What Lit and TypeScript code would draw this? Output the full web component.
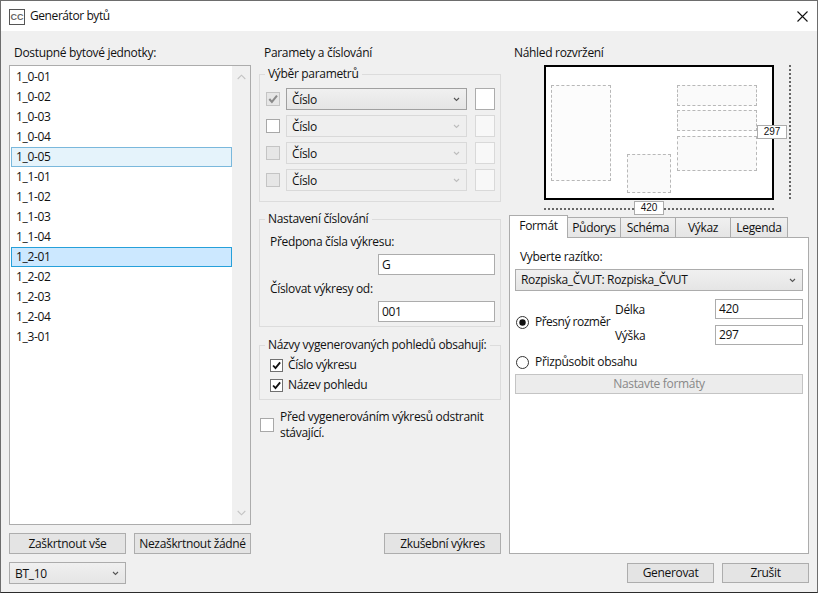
import { LitElement, html, css, svg } from "lit";
import { customElement } from "lit/decorators.js";

const UNITS = ["1_0-01","1_0-02","1_0-03","1_0-04","1_0-05","1_1-01","1_1-02","1_1-03","1_1-04","1_2-01","1_2-02","1_2-03","1_2-04","1_3-01"];

const chev = () => html`<svg class="chev" width="7" height="5" viewBox="0 0 7 5"><path d="M1 1 L3.5 3.5 L6 1" fill="none" stroke="currentColor" stroke-width="1.1"/></svg>`;
const arrow = (cls = "") => html`<svg class="${cls}" width="9" height="6" viewBox="0 0 9 6"><path d="M.7 1 L4.5 4.8 L8.3 1" fill="none" stroke="currentColor" stroke-width="1.1"/></svg>`;
const tick = svg`<path d="M2.5 6.5 L5.3 9.6 L10.8 2.8" fill="none" stroke="currentColor" stroke-width="2.2"/>`;

@customElement("app-root")
export class AppRoot extends LitElement {
  static styles = css`
    :host { display: block; width: 818px; height: 593px; font-family: "Open Sans", "Noto Sans", sans-serif; font-size: 12px; line-height: 16px; color: #111; letter-spacing: -0.32px; }
    * { box-sizing: border-box; }
    .win { width: 818px; height: 593px; border: 1px solid #6d6d6d; border-bottom-color: #2b2b2b; background: #f0f0f0; display: flex; flex-direction: column; }
    .title { height: 30px; background: #fff; display: flex; align-items: center; padding-left: 8px; flex: none; }
    .title-text { letter-spacing: -0.42px; }
    .logo { width: 16px; height: 16px; border: 1px solid #555; font: bold 9px/14px "Liberation Sans", sans-serif; color: #666; text-align: center; letter-spacing: 0; margin-right: 5px; margin-top: 1px; }
    .x { margin-left: auto; margin-right: 9px; display: block; }
    .main { flex: none; height: 523px; display: flex; gap: 8px; padding-left: 8px; }
    .col { display: flex; flex-direction: column; flex: none; }
    .left, .mid { width: 242px; }
    .right { width: 300px; }
    .head { padding-top: 14px; height: 34px; flex: none; padding-left: 5px; }
    .list { height: 460px; flex: none; background: #fff; border: 1px solid #acacac; display: flex; }
    .items { width: 222px; padding: 1px 0 0 1px; }
    .item { height: 20px; width: 221px; padding: 1px 0 0 5px; line-height: 18px; }
    .item.hover { background: #e5f3fb; border: 1px solid #7ab8dc; padding: 0 0 0 4px; }
    .item.sel { background: #cce8ff; border: 1px solid #26a0da; padding: 0 0 0 4px; }
    .sb { margin-left: auto; width: 18px; background: #f0f0f0; display: flex; flex-direction: column; justify-content: space-between; align-items: center; padding: 8px 0; color: #c4c4c4; }
    .sb .up { transform: scaleY(-1); }
    .btnrow { display: flex; gap: 8px; margin-top: 8px; }
    .btn { height: 21px; border: 1px solid #adadad; background: #e4e4e4; display: flex; align-items: center; justify-content: center; flex: none; }
    .w117 { width: 117px; }
    .group { margin: 0; border: 1px solid #dcdcdc; padding: 0; min-width: 0; }
    .group legend { padding: 0 4px 0 3px; height: 16px; white-space: nowrap; }
    .g1 { margin-top: 1px; padding: 6px 5px 10px 6px; }
    .g1 legend { margin-left: -1px; }
    .prow { display: flex; align-items: center; height: 22px; }
    .prow + .prow { margin-top: 5px; }
    .cb { width: 14px; height: 14px; border: 1px solid #707070; background: #fff; flex: none; color: #111; display: block; }
    .cb.dis { background: #e6e6e6; border-color: #c4c4c4; color: #8a8a8a; }
    .cb.soft { border-color: #a8a8a8; }
    .cb svg { display: block; }
    .combo { display: flex; align-items: center; justify-content: space-between; padding: 0 6px 0 5px; height: 22px; border: 1px solid #acacac; background: linear-gradient(#f0f0f0, #e5e5e5); flex: none; color: #555; }
    .combo span { color: #111; }
    .combo.off { background: #efefef; border-color: #d9d9d9; color: #bdbdbd; }
    .c181 { width: 181px; margin-left: 6px; }
    .c181 span, .foot .combo span { padding-top: 2px; }
    .combo.first { border-color: #a0a0a0; }
    .swatch { width: 20px; height: 22px; border: 1px solid #acacac; background: #fff; margin-left: 8px; flex: none; }
    .swatch.off { background: #f8f8f8; border-color: #d9d9d9; }
    .g2 { margin-top: 9px; padding: 7px 5px 4px 10px; }
    .g2 legend, .g3 legend { margin-left: -5px; }
    .input { height: 21px; border: 1px solid #acacac; background: #fff; padding: 0 0 0 3px; display: flex; align-items: center; flex: none; }
    .g2 .input { width: 117px; margin: 4px 0 0 108px; }
    .g2 .lbl2 { margin-top: 6px; }
    .g3 { margin-top: 10px; padding: 4px 0 6px 10px; }
    .cbrow { display: flex; align-items: center; height: 16px; gap: 5px; }
    .cbrow + .cbrow { margin-top: 4px; }
    .cb.small { width: 13px; height: 13px; }
    .before { display: flex; align-items: center; margin-top: 9px; gap: 6px; padding-left: 1px; white-space: nowrap; }
    .test { margin-top: auto; align-self: flex-end; width: 117px; }
    .sheetbox { position: relative; height: 150px; flex: none; }
    .sheet { position: absolute; left: 35px; top: 0; width: 230px; height: 135px; border: 2px solid #000; background: #fff; }
    .bx { position: absolute; border: 1px dashed #b8b8b8; background: #fafafa; }
    .b1 { left: 5px; top: 18px; width: 60px; height: 96px; background: #fcfcfc; }
    .b2 { left: 81px; top: 87px; width: 44px; height: 39px; }
    .b3 { left: 131px; top: 18px; width: 80px; height: 21px; }
    .b4 { left: 131px; top: 43px; width: 80px; height: 21px; }
    .b5 { left: 131px; top: 69px; width: 80px; height: 35px; }
    .vline { position: absolute; left: 280px; top: 0; height: 134px; border-left: 2px dotted #666; }
    .hline { position: absolute; left: 35px; top: 143px; width: 230px; border-top: 2px dotted #666; }
    .dim { position: absolute; width: 30px; height: 14px; background: #fff; border: 1px solid #acacac; font: 10px/12px "Liberation Sans", sans-serif; letter-spacing: 0; text-align: center; color: #111; }
    .d297 { left: 248px; top: 60px; }
    .d420 { left: 125px; top: 136px; }
    .tabs { display: flex; align-items: flex-end; height: 22px; flex: none; position: relative; z-index: 1; }
    .tab { height: 20px; border: 1px solid #acacac; border-left: 0; border-bottom: 0; background: linear-gradient(#f0f0f0, #e5e5e5); display: flex; align-items: center; justify-content: center; flex: none; }
    .tab.on { height: 23px; margin-bottom: -1px; background: #fff; border-left: 1px solid #acacac; padding-bottom: 3px; }
    .tab:nth-child(1) { width: 59px; }
    .tab:nth-child(2) { width: 53px; }
    .tab:nth-child(3) { width: 55px; }
    .tab:nth-child(4) { width: 55px; }
    .tab:nth-child(5) { width: 57px; }
    .panel { flex: 1; background: #fff; border: 1px solid #acacac; padding: 11px 5px 0 5px; }
    .panel .lbl { padding-left: 5px; }
    .panel .combo { margin-top: 4px; }
    .size { display: grid; grid-template-columns: 100px 100px 88px; grid-template-rows: 20px 20px; row-gap: 6px; margin-top: 8px; }
    .size .rad { grid-row: 1 / span 2; grid-column: 1; align-self: center; letter-spacing: -0.5px; }
    .size .input { height: 20px; }
    .size .t { padding-top: 3px; }
    .rad { display: flex; align-items: center; gap: 6px; height: 16px; padding-left: 1px; }
    .radio { width: 13px; height: 13px; flex: none; display: block; }
    .rad.second { margin-top: 9px; }
    .fmt { height: 20px; width: 288px; margin-top: 4px; color: #888; background: #ececec; border-color: #c4c4c4; }
    .foot { flex: 1; display: flex; justify-content: space-between; padding: 8px 8px 0 8px; }
    .foot .combo { width: 117px; }
    .foot .btns { display: flex; gap: 8px; padding-top: 1px; }
    .foot .btn { width: 87px; height: 20px; }
  `;

  render() {
    return html`<div class="win">
      <div class="title">
        <div class="logo">CC</div>
        <span class="title-text">Generátor bytů</span>
        <svg class="x" width="11" height="11" viewBox="0 0 11 11"><path d="M.5 .5 L10.5 10.5 M10.5 .5 L.5 10.5" stroke="#111" stroke-width="1.1"/></svg>
      </div>
      <div class="main">
        <div class="col left">
          <div class="head">Dostupné bytové jednotky:</div>
          <div class="list">
            <div class="items">
              ${UNITS.map((u, i) => html`<div class="item ${i === 4 ? "hover" : ""} ${i === 9 ? "sel" : ""}">${u}</div>`)}
            </div>
            <div class="sb">${arrow("up")}${arrow()}</div>
          </div>
          <div class="btnrow">
            <div class="btn w117">Zaškrtnout vše</div>
            <div class="btn w117">Nezaškrtnout žádné</div>
          </div>
        </div>
        <div class="col mid">
          <div class="head">Paramety a číslování</div>
          <fieldset class="group g1">
            <legend>Výběr parametrů</legend>
            ${[0, 1, 2, 3].map((i) => html`<div class="prow">
              <div class="cb ${i === 1 ? "soft" : "dis"}">${i === 0 ? html`<svg width="12" height="12" viewBox="0 0 13 13">${tick}</svg>` : ""}</div>
              <div class="combo c181 ${i === 0 ? "first" : "off"}"><span>Číslo</span>${chev()}</div>
              <div class="swatch ${i === 0 ? "" : "off"}"></div>
            </div>`)}
          </fieldset>
          <fieldset class="group g2">
            <legend>Nastavení číslování</legend>
            <div>Předpona čísla výkresu:</div>
            <div class="input">G</div>
            <div class="lbl2">Číslovat výkresy od:</div>
            <div class="input">001</div>
          </fieldset>
          <fieldset class="group g3">
            <legend>Názvy vygenerovaných pohledů obsahují:</legend>
            <div class="cbrow"><div class="cb small"><svg width="11" height="11" viewBox="0 0 13 13">${tick}</svg></div><span>Číslo výkresu</span></div>
            <div class="cbrow"><div class="cb small"><svg width="11" height="11" viewBox="0 0 13 13">${tick}</svg></div><span>Název pohledu</span></div>
          </fieldset>
          <div class="before"><div class="cb soft"></div><div>Před vygenerováním výkresů odstranit<br>stávající.</div></div>
          <div class="btn test">Zkušební výkres</div>
        </div>
        <div class="col right">
          <div class="head">Náhled rozvržení</div>
          <div class="sheetbox">
            <div class="sheet">
              <div class="bx b1"></div><div class="bx b2"></div><div class="bx b3"></div><div class="bx b4"></div><div class="bx b5"></div>
            </div>
            <div class="vline"></div>
            <div class="hline"></div>
            <div class="dim d297">297</div>
            <div class="dim d420">420</div>
          </div>
          <div class="tabs">
            <div class="tab on">Formát</div><div class="tab">Půdorys</div><div class="tab">Schéma</div><div class="tab">Výkaz</div><div class="tab">Legenda</div>
          </div>
          <div class="panel">
            <div class="lbl">Vyberte razítko:</div>
            <div class="combo"><span>Rozpiska_ČVUT: Rozpiska_ČVUT</span>${chev()}</div>
            <div class="size">
              <div class="rad">
                <svg class="radio" viewBox="0 0 13 13"><circle cx="6.5" cy="6.5" r="6" fill="#fff" stroke="#333"/><circle cx="6.5" cy="6.5" r="3.2" fill="#111"/></svg>
                <span>Přesný rozměr</span>
              </div>
              <div class="t">Délka</div><div class="input">420</div>
              <div class="t">Výška</div><div class="input">297</div>
            </div>
            <div class="rad second">
              <svg class="radio" viewBox="0 0 13 13"><circle cx="6.5" cy="6.5" r="6" fill="#fff" stroke="#333"/></svg>
              <span>Přizpůsobit obsahu</span>
            </div>
            <div class="btn fmt">Nastavte formáty</div>
          </div>
        </div>
      </div>
      <div class="foot">
        <div class="combo"><span>BT_10</span>${chev()}</div>
        <div class="btns"><div class="btn">Generovat</div><div class="btn">Zrušit</div></div>
      </div>
    </div>`;
  }
}
